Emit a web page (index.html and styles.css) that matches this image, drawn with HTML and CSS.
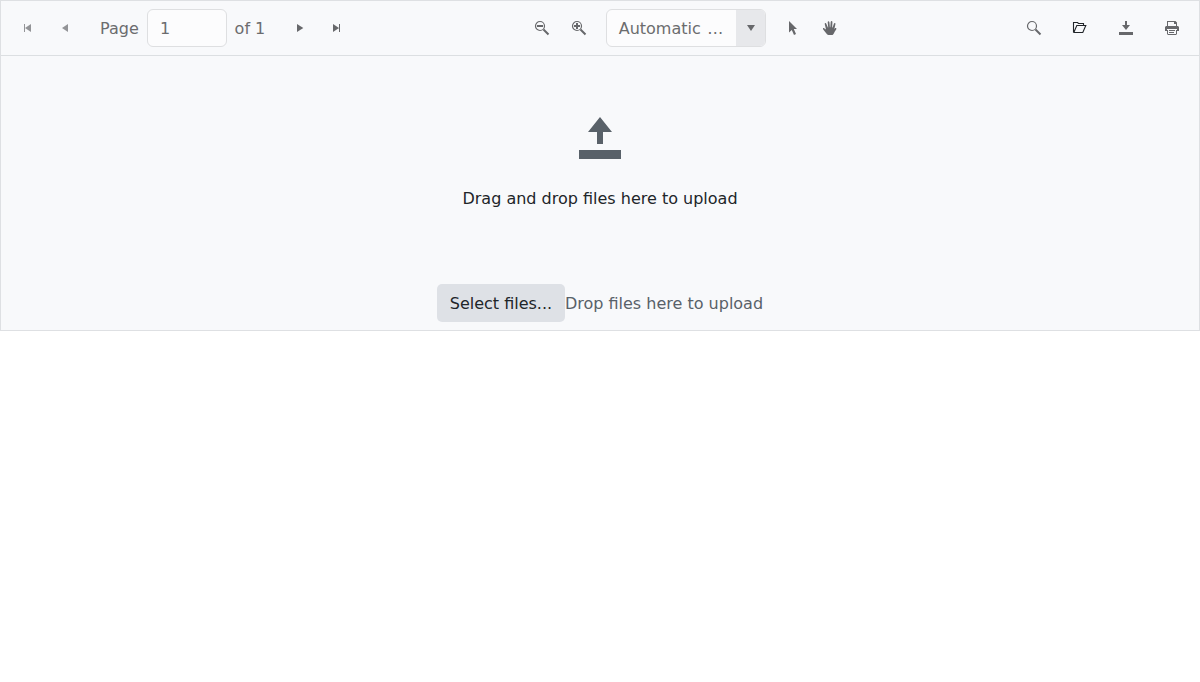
FILE: index.html
```html
<!DOCTYPE html>
<html lang="en">
<head>
<meta charset="utf-8">
<title>PDF Viewer</title>
<link rel="stylesheet" href="styles.css">
</head>
<body>
<div class="viewer">
  <div class="toolbar">
    <div class="group pager">
      <svg class="icon faded" viewBox="0 0 16 16"><path d="M4 4h1v8H4zM11 4v8L5 8z"/></svg>
      <svg class="icon faded prev" viewBox="0 0 16 16"><path d="M11 4v8L5 8z"/></svg>
      <span class="label">Page</span>
      <input class="page-input" type="text" value="1" aria-label="Page">
      <span class="total">of 1</span>
      <svg class="icon next" viewBox="0 0 16 16"><path d="M5 4v8l6.300-4z"/></svg>
      <svg class="icon last" viewBox="0 0 16 16"><path d="M5 4v8l6-4zM11 4h1v8h-1z"/></svg>
    </div>
    <div class="group zooming">
      <svg class="icon" viewBox="0 0 16 16"><circle class="ring" cx="6" cy="6" r="4.500"/><path d="M3 5h6v2H3zM8.800 10.200l1.400-1.400 5 5-1.400 1.400z"/></svg>
      <svg class="icon zoom-in" viewBox="0 0 16 16"><circle class="ring" cx="6" cy="6" r="4.500"/><path d="M3 5h2V3h2v2h2v2H7v2H5V7H3zM8.800 10.200l1.400-1.400 5 5-1.400 1.400z"/></svg>
      <div class="combo">
        <span class="combo-text">Automatic …</span>
        <span class="combo-button"><svg class="icon" viewBox="0 0 16 16"><path d="M4 5h8l-4 6z"/></svg></span>
      </div>
      <svg class="icon" viewBox="0 0 16 16"><path d="M4 1l8 8H8.800l2.200 5-2 1-2.200-5L4 12.500z"/></svg>
      <svg class="icon hand" viewBox="0 0 16 16"><path d="M5 14.200L1.200 9.400c-.7-1 .3-1.700 1.200-1L4 9.500 2.800 4.200c-.3-1.300 1.100-1.600 1.500-.4L5.900 7.500h.3L5.700 2.200c0-1.400 1.500-1.400 1.700 0L7.900 7.200h.4L8.700 1.900c.2-1.200 1.700-1.200 1.700.2L10.200 7.500h.4l1.300-3.700c.5-1.200 1.800-.7 1.500.5l-1.100 5 .5-.8c.8-1 2-.2 1.500.8L12.500 12c-.5 1.500-1.100 2.200-2 3H6.500c-.6 0-1.100-.3-1.500-.8z"/></svg>
    </div>
    <div class="group actions">
      <svg class="icon" viewBox="0 0 16 16"><circle class="ring" cx="6" cy="6" r="4.500"/><path d="M8.800 10.200l1.400-1.400 5 5-1.400 1.400z"/></svg>
      <svg class="icon open" viewBox="0 0 16 16"><path class="outline" d="M1.500 12.500v-10h4l1 1h5v2M1.500 12.500h9.300l3-7H4.800L1.800 12.500"/></svg>
      <svg class="icon" viewBox="0 0 16 16"><path d="M7 1h2v4h3L8 10 4 5h3zM1 12h14v3H1z"/></svg>
      <svg class="icon" viewBox="0 0 16 16"><path fill-rule="evenodd" d="M3 1h8.500L13 2.500V6h1l1 1v4h-2v3l-1 1H4l-1-1v-3H1V7l1-1h1zm1 1v4h8V4h-2V2zm-1 7v1h1v4h8v-4h1V9zM5 10h6v1H5zM5 12h5v1H5z"/></svg>
    </div>
  </div>
  <div class="dropzone">
    <svg class="upload-icon" viewBox="0 0 16 16"><path d="M8 1l4 5H9v4H7V6H4zM1 12h14v3H1z"/></svg>
    <p class="hint">Drag and drop files here to upload</p>
    <div class="upload">
      <button class="select" type="button">Select files...</button>
      <span class="drop-hint">Drop files here to upload</span>
    </div>
  </div>
</div>
</body>
</html>
```
FILE: styles.css
```css
* { box-sizing: border-box; }
body {
  margin: 0;
  background: #fff;
  color: #212529;
  font: 16px/24px "DejaVu Sans", sans-serif;
}
.viewer {
  height: 331px;
  border: 1px solid #dee0e3;
  background: #f8f9fb;
}
.toolbar {
  display: flex;
  height: 55px;
  padding: 0 19px;
  border-bottom: 1px solid #dcdfe2;
  color: #6b6c6e;
}
.group { display: flex; align-items: center; }
.pager { width: 514px; }
.zooming { width: 492px; }
.actions { gap: 30px; }
.icon { flex: none; width: 16px; height: 16px; fill: #67686b; }
.faded { fill: #939497; }
.prev { margin-left: 21px; }
.label { width: 47px; margin-left: 27px; padding-top: 2px; }
.page-input {
  width: 80px;
  height: 38px;
  padding: 0 12px;
  border: 1px solid #dedfe1;
  border-radius: 6px;
  background: #fcfcfd;
  color: inherit;
  font: inherit;
}
.total { width: 57px; padding: 2px 0 0 7.600px; white-space: nowrap; }
.next { margin-left: 8px; }
.last { margin-left: 20px; }
.ring { fill: none; stroke: #67686b; stroke-width: 1.2; }
.zoom-in { margin-left: 21px; }
.combo {
  display: flex;
  width: 160px;
  height: 38px;
  margin: 0 19px;
  overflow: hidden;
  border: 1px solid #dedfe1;
  border-radius: 6px;
  background: #fcfcfd;
}
.combo-text {
  width: 129px;
  padding: 7px 0 5px 11.700px;
  white-space: nowrap;
  word-spacing: 1.5px;
}
.combo-button {
  display: flex;
  flex: 1;
  align-items: center;
  justify-content: center;
  background: #e7e8eb;
}
.hand { margin-left: 21px; }
.outline { fill: none; stroke: #212529; stroke-width: 1.1; }
.dropzone {
  display: flex;
  flex-direction: column;
  align-items: center;
  padding-top: 58px;
}
.upload-icon { width: 48px; height: 48px; fill: #596169; }
.hint { margin: 25px 0 73px; }
.upload { display: flex; align-items: center; }
.select {
  width: 128px;
  height: 38px;
  padding: 2px 0 0;
  border: 0;
  border-radius: 5px;
  background: #dee1e6;
  color: inherit;
  font: inherit;
}
.drop-hint { padding-top: 2px; color: #596169; }
```
